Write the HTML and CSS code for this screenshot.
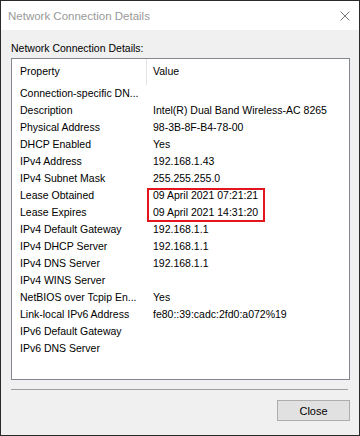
FILE: index.html
```html
<!DOCTYPE html>
<html>
<head>
<meta charset="utf-8">
<link rel="stylesheet" href="styles.css">
</head>
<body>
<div class="window">
  <div class="titlebar">
    <span class="title">Network Connection Details</span>
    <svg class="close-x" width="10" height="10" viewBox="0 0 10 10"><path d="M0.5 0.5L9.5 9.5M9.5 0.5L0.5 9.5" stroke="#7a7a7a" stroke-width="1" fill="none"/></svg>
  </div>
  <div class="body">
    <div class="label">Network Connection Details:</div>
    <div class="listbox">
      <div class="row header">
        <div class="c1">Property</div>
        <div class="c2">Value</div>
      </div>
      <div class="row"><div class="c1">Connection-specific DN...</div><div class="c2"></div></div>
      <div class="row"><div class="c1">Description</div><div class="c2">Intel(R) Dual Band Wireless-AC 8265</div></div>
      <div class="row"><div class="c1">Physical Address</div><div class="c2">98-3B-8F-B4-78-00</div></div>
      <div class="row"><div class="c1">DHCP Enabled</div><div class="c2">Yes</div></div>
      <div class="row"><div class="c1">IPv4 Address</div><div class="c2">192.168.1.43</div></div>
      <div class="row"><div class="c1">IPv4 Subnet Mask</div><div class="c2">255.255.255.0</div></div>
      <div class="row"><div class="c1">Lease Obtained</div><div class="c2">09 April 2021 07:21:21</div></div>
      <div class="row"><div class="c1">Lease Expires</div><div class="c2">09 April 2021 14:31:20</div></div>
      <div class="row"><div class="c1">IPv4 Default Gateway</div><div class="c2">192.168.1.1</div></div>
      <div class="row"><div class="c1">IPv4 DHCP Server</div><div class="c2">192.168.1.1</div></div>
      <div class="row"><div class="c1">IPv4 DNS Server</div><div class="c2">192.168.1.1</div></div>
      <div class="row"><div class="c1">IPv4 WINS Server</div><div class="c2"></div></div>
      <div class="row"><div class="c1">NetBIOS over Tcpip En...</div><div class="c2">Yes</div></div>
      <div class="row"><div class="c1">Link-local IPv6 Address</div><div class="c2">fe80::39:cadc:2fd0:a072%19</div></div>
      <div class="row"><div class="c1">IPv6 Default Gateway</div><div class="c2"></div></div>
      <div class="row"><div class="c1">IPv6 DNS Server</div><div class="c2"></div></div>
      <div class="highlight"></div>
    </div>
    <div class="separator"></div>
    <div class="actions">
      <button class="btn">Close</button>
    </div>
  </div>
</div>
</body>
</html>
```
FILE: styles.css
```css
html, body {
  margin: 0;
  padding: 0;
  background: #ffffff;
}
.window {
  width: 360px;
  height: 436px;
  box-sizing: border-box;
  border: 1px solid #2a2a2a;
  background: #f0f0f0;
  display: flex;
  flex-direction: column;
  font-family: "Liberation Sans", Arial, sans-serif;
  font-size: 10.5px;
  color: #000;
}
.titlebar {
  height: 29px;
  background: #ffffff;
  display: flex;
  align-items: center;
  justify-content: space-between;
  padding: 0 9px 0 7px;
}
.title {
  font-size: 11.5px;
  color: #999999;
}
.close-x {
  display: block;
}
.body {
  flex: 1;
  display: flex;
  flex-direction: column;
  padding: 10px 9px 0 10px;
}
.label {
  height: 18px;
  line-height: 13px;
  padding-top: 2px;
  box-sizing: border-box;
}
.listbox {
  position: relative;
  height: 322px;
  box-sizing: border-box;
  border: 1px solid #828790;
  background: #ffffff;
}
.row {
  display: flex;
  height: 17px;
  line-height: 17px;
  white-space: nowrap;
}
.row.header {
  height: 26px;
  line-height: 24px;
}
.c1 {
  width: 135px;
  box-sizing: border-box;
  padding-left: 8px;
  overflow: hidden;
}
.c2 {
  flex: 1;
  padding-left: 6px;
}
.header .c1 {
  border-right: 1px solid #e5e5e5;
}
.highlight {
  position: absolute;
  left: 135px;
  top: 129px;
  width: 118px;
  height: 34px;
  box-sizing: border-box;
  border: 2px solid #e3151f;
}
.separator {
  margin: 9px 2px 0 0;
  height: 1px;
  background: #a0a0a0;
}
.actions {
  display: flex;
  justify-content: flex-end;
  padding-top: 10px;
}
.btn {
  width: 73px;
  height: 21px;
  margin: 0;
  padding: 0;
  box-sizing: border-box;
  border: 1px solid #adadad;
  background: #e1e1e1;
  font-family: "Liberation Sans", Arial, sans-serif;
  font-size: 11px;
  color: #000;
}
```
